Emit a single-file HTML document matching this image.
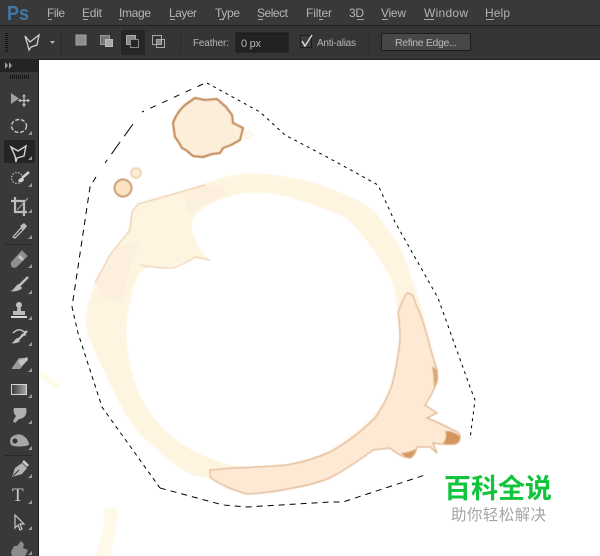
<!DOCTYPE html>
<html><head><meta charset="utf-8">
<style>
html,body{margin:0;padding:0;background:#fff;width:600px;height:556px;overflow:hidden}
svg{display:block}
text{font-family:"Liberation Sans","Noto Sans CJK SC",sans-serif}
.m{font-size:12px;fill:#b4b4b4}
.u{stroke:#a8a8a8;stroke-width:1}
</style></head><body>
<svg width="600" height="556" viewBox="0 0 600 556" xmlns="http://www.w3.org/2000/svg">
<defs>
<filter id="b1" x="-5%" y="-5%" width="110%" height="110%"><feGaussianBlur stdDeviation="0.45"/></filter>
<filter id="b2" x="-5%" y="-5%" width="110%" height="110%"><feGaussianBlur stdDeviation="0.35"/></filter>
<linearGradient id="g"><stop offset="0" stop-color="#3a3a3a"/><stop offset="1" stop-color="#a8a8a8"/></linearGradient>
</defs>
<rect width="600" height="556" fill="#fff"/>

<!-- stain -->
<g filter="url(#b1)">
<path d="M105 508H118Q117 530 110 556H96Q104 530 105 508Z" fill="#fef9e9"/>
<path d="M39 371L44 373L60 385L57 389L39 378Z" fill="#fefbe9"/>
<path fill-rule="evenodd" fill="#fef5e1" d="M91 294.500Q95 282 102.500 268.500Q110 255 120 242.500Q130 230 131 221Q132 212 135 208Q138 204 157.500 198.500Q177 193 198.500 185.500Q220 178 233.500 175Q247 172 270 174.500Q293 177 311.500 182Q330 187 351 197Q372 207 377.500 215Q383 223 392.500 235.500Q402 248 410 272.500Q418 297 421.500 308.500Q425 320 431 344Q437 368 437 375Q437 382 431 393.500Q425 405 400 422Q375 440 352 459Q330 478 311 483Q293 488 270 491Q247 494 237 490.500Q227 487 218 482Q210 477 198 476Q187 475 172 462.500Q157 450 143.500 437.500Q130 425 115 394Q100 363 92.500 346.500Q85 330 86 318.500Q87 307 91 294.500Z
M126.500 325Q125 343 131.500 370Q138 397 152.500 416Q167 435 183.500 445Q200 455 218.500 461.500Q237 468 262 466.500Q287 465 308.500 458.500Q330 452 352.500 435Q375 418 383.500 401.500Q392 385 396 362.500Q400 340 399 326Q398 312 395.500 296Q393 280 382.500 263.500Q372 247 361 233.500Q350 220 340 215Q330 210 301.500 201Q273 192 253 192.500Q233 193 210.500 204Q188 215 192.500 231Q197 247 203.500 253.500L210 260L202 258.500Q195 257 184 262.500Q173 268 156.500 266.500Q140 265 134 286Q128 307 126.500 325Z"/>
<path d="M95 283L110 255L130 230L132 212L138 204L177 193L205 185" fill="none" stroke="#e6bd94" stroke-width="1"/>
<path d="M96 284L103 298L122 303L130 268L140 240L120 245Z" fill="#fbeedd" opacity=".8"/>
<path d="M183 194L205 186L223 186L224 195L203 205L188 214Z" fill="#fbeedd" opacity=".8"/>
<path d="M140 265Q156 268 173 268Q185 264 195 257L210 260" fill="none" stroke="#ecc59c" stroke-width="1"/>
<path d="M210 470Q220 469 233 468Q260 467 287 465Q310 461 330 452Q355 438 375 418Q386 402 392 385Q398 360 400 340Q400 325 398 313Q402 300 407 293Q411 293 413 296Q416 305 420 313Q426 330 430 347Q434 360 437 370Q438 376 437 382Q432 395 425 405L437 413L427 418Q440 423 453 430Q460 432 460 437Q460 443 455 444Q444 445 433 443L437 453L430 447L417 447Q415 456 410 458Q400 457 390 448Q381 449 373 450Q352 466 330 478Q312 485 293 488Q270 493 247 494Q236 491 227 487Q216 482 210 477Z" fill="#fde9d4" stroke="#d9a173" stroke-width="1"/>
<path d="M445 431Q455 431 460 437Q459 443 454 444Q448 445 443 443Q448 437 445 431Z" fill="#d3955a"/>
<path d="M401 453Q406 458 410 458Q414 455 416 449Q408 453 401 453Z" fill="#d49a62"/>
<path d="M437 370Q438 376 437 382L434 390Q434 378 432 366Z" fill="#dca878"/>
<path d="M173 123Q177 112 185 105L195 98L205 100L217 99L226 107L232 115L233 123L243 128L240 140L231 145L223 148L220 153L212 154L203 157L193 156L186 150L182 148L178 141L175 137Z" fill="#fdeeda" stroke="#bd7f45" stroke-width="2" stroke-linejoin="round"/>
<circle cx="123" cy="188" r="8.500" fill="#fce3c0" stroke="#bf8f5e" stroke-width="1.700"/>
<circle cx="136" cy="173" r="5" fill="#fcebd2" stroke="#e6c49c" stroke-width="1.200"/>
<circle cx="248" cy="135" r="3.600" fill="#fffdf8" stroke="#f9efd6" stroke-width="1.300"/>
</g>

<!-- selection -->
<g fill="none" stroke="#000" stroke-width="1">
<path stroke-dasharray="3 4" d="M207 83L260 112L285 135L327 157L378 185L395 222L438 298L470 387L475 400L470 439"/>
<path stroke-dasharray="6 7" d="M203 84L142 112"/>
<path stroke-dasharray="15 7" d="M133 124L105 163"/>
<path stroke-dasharray="6 5" d="M96 177L90 187L72 307"/>
<path stroke-dasharray="4 4" d="M72 307L78 333L102 407L160 488"/>
<path stroke-dasharray="6 5" d="M160 488L223 505L247 507L330 502L343 502L425 475"/>
</g>

<!-- top bars -->
<rect width="600" height="26" fill="#393939"/>
<rect y="25" width="600" height="1" fill="#1f1f1f"/>
<rect y="26" width="600" height="33" fill="#353535"/>
<rect y="59" width="600" height="1" fill="#202020"/>
<g filter="url(#b2)">
<text x="7" y="20" font-size="20" font-weight="bold" fill="#3f78ac" textLength="22" lengthAdjust="spacingAndGlyphs">Ps</text>
<text class="m" x="47" y="17" textLength="18">File</text><path class="u" d="M48 19.500H52"/>
<text class="m" x="82" y="17" textLength="20">Edit</text><path class="u" d="M83 19.500H88"/>
<text class="m" x="119" y="17" textLength="32">Image</text><path class="u" d="M119 19.500H122"/>
<text class="m" x="169" y="17" textLength="28">Layer</text><path class="u" d="M170 19.500H175"/>
<text class="m" x="215" y="17" textLength="25">Type</text><path class="u" d="M219 19.500H224"/>
<text class="m" x="257" y="17" textLength="31">Select</text><path class="u" d="M258 19.500H263"/>
<text class="m" x="306" y="17" textLength="26">Filter</text><path class="u" d="M319 19.500H323"/>
<text class="m" x="349" y="17" textLength="15">3D</text><path class="u" d="M357 19.500H364"/>
<text class="m" x="381" y="17" textLength="25">View</text><path class="u" d="M382 19.500H388"/>
<text class="m" x="424" y="17" textLength="44">Window</text><path class="u" d="M424 19.500H434"/>
<text class="m" x="485" y="17" textLength="25">Help</text><path class="u" d="M486 19.500H494"/>

<!-- options bar -->
<g fill="#191919">
<rect x="5" y="33" width="3" height="1"/><rect x="5" y="35" width="3" height="1"/><rect x="5" y="37" width="3" height="1"/><rect x="5" y="39" width="3" height="1"/><rect x="5" y="41" width="3" height="1"/><rect x="5" y="43" width="3" height="1"/><rect x="5" y="45" width="3" height="1"/><rect x="5" y="47" width="3" height="1"/><rect x="5" y="49" width="3" height="1"/><rect x="5" y="51" width="3" height="1"/>
</g>
<path d="M25 36L30 42L39 35L37 45L31 47L29 50L28 46Z" fill="none" stroke="#d0d0d0" stroke-width="1.300"/>
<path d="M50 41H55L52.500 44Z" fill="#b0b0b0"/>
<rect x="61" y="32" width="1" height="23" fill="#292929"/>
<rect x="76" y="35" width="10" height="10" fill="#8e8e8e" stroke="#a5a5a5"/>
<rect x="100.500" y="35.500" width="9" height="9" fill="#777" stroke="#999"/>
<rect x="105.500" y="39.500" width="7" height="7" fill="#aaa" stroke="#bbb"/>
<rect x="121" y="30" width="24" height="25" rx="1" fill="#262626"/>
<rect x="126.500" y="35.500" width="9" height="9" fill="#888" stroke="#aaa"/>
<rect x="130.500" y="39.500" width="8" height="8" fill="#262626" stroke="#888"/>
<rect x="152.500" y="35.500" width="9" height="9" fill="none" stroke="#aaa"/>
<rect x="156.500" y="39.500" width="8" height="8" fill="none" stroke="#aaa"/>
<rect x="157" y="40" width="4" height="4" fill="#888"/>
<rect x="180" y="32" width="1" height="23" fill="#292929"/>
<text x="193" y="46" font-size="10" fill="#b4b4b4" textLength="36">Feather:</text>
<rect x="236" y="33" width="52" height="19" fill="#232323" stroke="#1c1c1c"/>
<text x="241" y="47" font-size="11" fill="#b8b8b8" textLength="20">0 px</text>
<rect x="300.500" y="35.500" width="11" height="12" fill="#3d3d3d" stroke="#1f1f1f"/>
<path d="M302 41L305 46L312 35" fill="none" stroke="#d6d6d6" stroke-width="1.500"/>
<text x="317" y="46" font-size="10" fill="#b4b4b4" textLength="39">Anti-alias</text>
<rect x="369" y="32" width="1" height="23" fill="#292929"/>
<rect x="381.500" y="33.500" width="89" height="17" rx="1" fill="#474747" stroke="#1f1f1f"/>
<text x="395" y="46" font-size="10.500" fill="#b8b8b8" textLength="62">Refine Edge...</text>
</g>

<!-- tools panel -->
<rect y="60" width="39" height="496" fill="#393939"/>
<rect x="38" y="60" width="1" height="496" fill="#1e1e1e"/>
<rect y="60" width="38" height="12" fill="#242424"/>
<path d="M5 62V69L8 65.500ZM9 62V69L12 65.500Z" fill="#a0a0a0"/>
<g fill="#151515"><rect x="10" y="75" width="1" height="4"/><rect x="12" y="75" width="1" height="4"/><rect x="14" y="75" width="1" height="4"/><rect x="16" y="75" width="1" height="4"/><rect x="18" y="75" width="1" height="4"/><rect x="20" y="75" width="1" height="4"/><rect x="22" y="75" width="1" height="4"/><rect x="24" y="75" width="1" height="4"/><rect x="26" y="75" width="1" height="4"/><rect x="28" y="75" width="1" height="4"/></g>
<rect x="4" y="140" width="31" height="23" fill="#252525"/>
<rect x="4" y="244" width="29" height="1" fill="#292929"/>
<rect x="4" y="455" width="29" height="1" fill="#292929"/>

<g filter="url(#b2)">
<!-- corner triangles -->
<g fill="#9a9a9a">
<path d="M32 135V131L28 135Z"/><path d="M32 160V156L28 160Z"/><path d="M32 187V183L28 187Z"/><path d="M32 213V209L28 213Z"/><path d="M32 239V235L28 239Z"/><path d="M32 268V264L28 268Z"/><path d="M32 294V290L28 294Z"/><path d="M32 320V316L28 320Z"/><path d="M32 346V342L28 346Z"/><path d="M32 372V368L28 372Z"/><path d="M32 398V394L28 398Z"/><path d="M32 424V420L28 424Z"/><path d="M32 450V446L28 450Z"/><path d="M32 478V474L28 478Z"/><path d="M32 504V500L28 504Z"/><path d="M32 530V526L28 530Z"/><path d="M32 555V551L28 555Z"/>
</g>
<!-- move -->
<path d="M11 93V104L19 98.500Z" fill="#a2a2a2"/>
<path d="M24 95V106M19 100.500H29" stroke="#c4c4c4" stroke-width="1.300" fill="none"/>
<path d="M24 94L22 96.500H26ZM24 107L22 104.500H26ZM18 100.500L20.500 98.500V102.500ZM30 100.500L27.500 98.500V102.500Z" fill="#c4c4c4"/>
<!-- marquee -->
<ellipse cx="19" cy="126" rx="7.500" ry="6.500" fill="none" stroke="#c4c4c4" stroke-width="1.400" stroke-dasharray="4 1.800"/>
<!-- lasso -->
<path d="M11 147L18 151L26 146L24 156L17 158L16 162L15 156Z" fill="none" stroke="#d4d4d4" stroke-width="1.400"/>
<!-- quick select -->
<circle cx="17" cy="178" r="5.500" fill="none" stroke="#c0c0c0" stroke-width="1.200" stroke-dasharray="1.500 1.500"/>
<path d="M29 172L22 178" stroke="#cfcfcf" stroke-width="2.500"/>
<path d="M18 181C20 176 24 178 24 180C22 183 20 183 18 181Z" fill="#cfcfcf"/>
<!-- crop -->
<path d="M15 197V212H27M11 201H24V216" fill="none" stroke="#bcbcbc" stroke-width="2.200"/>
<path d="M17 210L28 198" stroke="#aaa" stroke-width="1"/>
<!-- eyedropper -->
<path d="M13 237L21 228L23 230L15 238Z" fill="none" stroke="#c8c8c8" stroke-width="1.200"/>
<path d="M20 226L24 223L27 226L24 230Z" fill="#bcbcbc"/>
<!-- heal -->
<path d="M12 263L22 252L26 256L16 266Q12 268 12 263Z" fill="#8f8f8f" stroke="#8f8f8f" stroke-width="2.500"/>
<path d="M19 256L23 260" stroke="#c4c4c4" stroke-width="3"/>
<!-- brush -->
<path d="M28 277L19 286" stroke="#c0c0c0" stroke-width="2.500"/>
<path d="M10 291C14 291 15 285 19 284L22 288C20 291 14 292 10 291Z" fill="#bcbcbc"/>
<!-- stamp -->
<circle cx="19" cy="305" r="3" fill="#c0c0c0"/>
<path d="M17.500 306H20.500L21 311H25V315H13V311H17Z" fill="#bcbcbc"/>
<rect x="11" y="316" width="16" height="2" fill="#dadada"/>
<!-- history brush -->
<path d="M13 333C17 329 21 329 24 332M25 331V335H21" fill="none" stroke="#c0c0c0" stroke-width="1.500"/>
<path d="M27 331L18 340" stroke="#c8c8c8" stroke-width="2"/>
<path d="M11 343C14 343 15 338 18 338L20 341C18 343 14 344 11 343Z" fill="#c0c0c0"/>
<!-- eraser -->
<path d="M12 368L19 358H28L26 362L20 369H12Z" fill="#9c9c9c"/>
<path d="M18 361L27 357L28 360L21 366Z" fill="#c4c4c4"/>
<!-- gradient -->
<rect x="11.500" y="384.500" width="15" height="10" fill="url(#g)" stroke="#d4d4d4"/>
<!-- dodge -->
<path d="M14 408H26C28 414 24 419 19 419L15 423L13 421L16 416C14 414 13 411 14 408Z" fill="#b0b0b0"/>
<!-- sponge -->
<path d="M10 441C10 436 17 433 22 435C26 437 29 441 29 445C24 447 14 447 11 445Z" fill="#a6a6a6"/>
<circle cx="15" cy="441" r="2.500" fill="#333"/>
<!-- pen -->
<path d="M12 477L15 468L22 463L27 468L22 474Z" fill="#b4b4b4"/>
<path d="M22 462L24 460L29 465L27 467Z" fill="#c8c8c8"/>
<path d="M13 476L19 470" stroke="#333" stroke-width="1"/>
<!-- type -->
<text x="12" y="501" font-size="19" fill="#c4c4c4" style="font-family:'Liberation Serif',serif">T</text>
<!-- path select -->
<path d="M15 515V528L18 525L20 530L22 529L20 524H24Z" fill="none" stroke="#c8c8c8" stroke-width="1.200"/>
<!-- custom shape -->
<path d="M11 552L14 546L17 546L21 541L24 544L23 548L28 550L25 556H12Z" fill="#8c8c8c"/>
</g>

<!-- watermark -->
<text x="444" y="498" font-size="27" font-weight="bold" fill="#12c43c" style="font-family:'Noto Sans CJK SC',sans-serif" textLength="108">百科全说</text>
<text x="451" y="520" font-size="15.500" fill="#a4a4a4" style="font-family:'Noto Sans CJK SC',sans-serif" textLength="95">助你轻松解决</text>
</svg>
</body></html>
